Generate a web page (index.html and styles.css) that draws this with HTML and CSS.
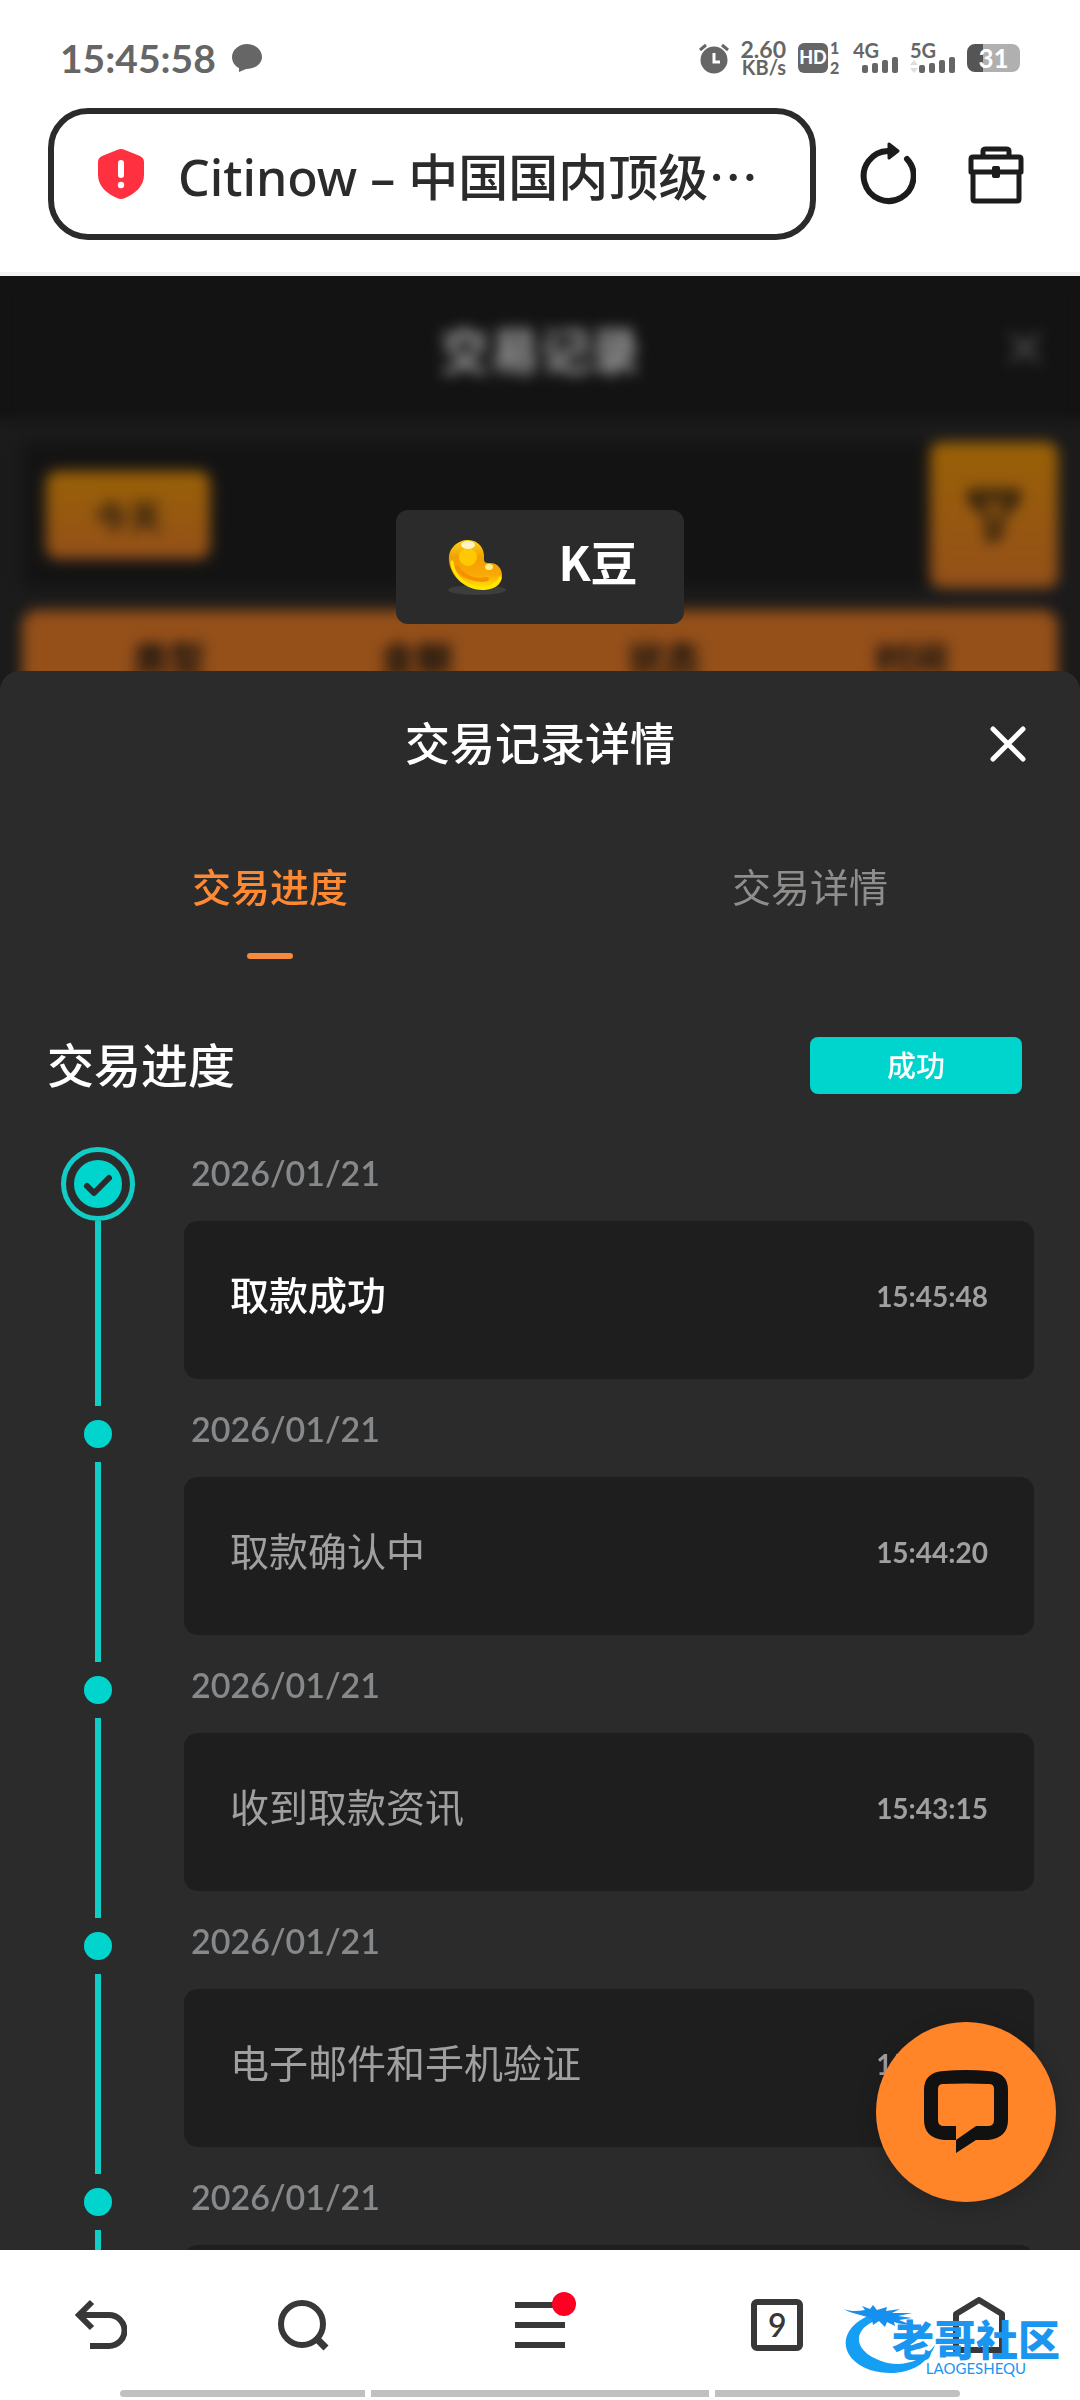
FILE: index.html
```html
<!DOCTYPE html>
<html lang="zh-CN">
  <head>
    <meta charset="UTF-8" />
    <meta name="viewport" content="width=device-width, initial-scale=1.0" />
    <title>交易记录详情</title>
    <link rel="stylesheet" href="styles.css">
  </head>
  <body>
    <header class="browser-top">
      <div class="status-bar">
        <div class="status-left">
          <span class="clock">15:45:58</span>
          <svg width="30" height="30" viewBox="0 0 30 30" fill="#666">
            <path d="M15 1C7 1 0 7 0 14c0 5 3 9 7 11v4l7-3c9 0 16-5 16-12S23 1 15 1z" />
          </svg>
        </div>
        <div class="status-right">
          <svg class="alarm" width="30" height="32" viewBox="0 0 30 32">
            <circle cx="15" cy="18" r="13.5" fill="#666" />
            <path d="M1 8l6-5M29 8l-6-5" stroke="#666" stroke-width="3" />
            <path d="M15 11v9h6" stroke="#fff" stroke-width="3" fill="none" />
          </svg>
          <div class="net-speed"><span>2.60</span><small>KB/s</small></div>
          <svg class="hd" width="43" height="44" viewBox="0 -6 43 44" fill="#666">
            <rect x="0" y="1" width="30" height="30" rx="6" />
            <text x="15" y="22" font-size="18" fill="#fff" text-anchor="middle">HD</text>
            <text x="32" y="12" font-size="16">1</text>
            <text x="32" y="32" font-size="16">2</text>
          </svg>
          <svg class="signal" width="45" height="44" viewBox="0 -6 45 44" fill="#666">
            <text x="0" y="16" font-size="20">4G</text>
            <rect x="9" y="23" width="6" height="8" rx="2" />
            <rect x="19" y="21" width="6" height="10" rx="2" />
            <rect x="29" y="18" width="6" height="13" rx="2" />
            <rect x="39" y="15" width="6" height="16" rx="2" />
          </svg>
          <svg class="signal" width="45" height="44" viewBox="0 -6 45 44" fill="#666">
            <text x="0" y="16" font-size="20">5G</text>
            <path d="M0 23l4-5 4 5zM0 26l4 5 4-5z" fill="#ddd" />
            <rect x="9" y="23" width="6" height="8" rx="2" />
            <rect x="19" y="21" width="6" height="10" rx="2" />
            <rect x="29" y="18" width="6" height="13" rx="2" />
            <rect x="39" y="15" width="6" height="16" rx="2" />
          </svg>
          <div class="battery">31</div>
        </div>
      </div>

      <div class="address-row">
        <div class="address-bar">
          <svg width="46" height="50" viewBox="0 0 46 50">
            <path d="M19 1q4-2 8 0l15 6q4 2 4 6v13c0 11-9 19-19 23q-4 2-8 0C9 45 0 37 0 26V13q0-4 4-6z" fill="#ff3040" />
            <path d="M23 14v12" stroke="#fff" stroke-width="6" stroke-linecap="round" />
            <circle cx="23" cy="36" r="3.2" fill="#fff" />
          </svg>
          <input type="text" aria-label="网址" value="Citinow – 中国国内顶级⋯" readonly />
        </div>
        <button class="icon-button" aria-label="刷新">
          <svg width="56" height="64" viewBox="0 0 56 64" fill="none" stroke="#1c1c1c" stroke-width="6">
            <path d="M28 9a25 25 0 1 0 19 8" stroke-linecap="round" />
            <path d="M29 2v14l9-7z" fill="#1c1c1c" stroke-width="3" stroke-linejoin="round" />
          </svg>
        </button>
        <button class="icon-button" aria-label="工具箱">
          <svg width="56" height="60" viewBox="0 0 56 60" fill="none" stroke="#1c1c1c" stroke-width="5" stroke-linejoin="round">
            <path d="M15 12V7q0-2 3-2h20q3 0 3 2v5" />
            <path d="M3 28V15q0-2 2-2h46q2 0 2 2v13zM5 28v27q0 2 2 2h42q2 0 2-2V28" />
            <rect x="26" y="24" width="4" height="8" fill="#1c1c1c" stroke-width="4" />
          </svg>
        </button>
      </div>
    </header>

    <main class="page">
      <!-- record list, sits behind the overlay -->
      <div class="records">
        <div class="records-header">
          <h1>交易记录</h1>
          <svg width="34" height="34" viewBox="0 0 34 34" stroke="#999" stroke-width="4">
            <path d="M3 3l28 28M31 3L3 31" />
          </svg>
        </div>
        <div class="filter-row">
          <div class="filter-dates"><button class="today">今天</button></div>
          <button class="filter-button" aria-label="筛选">
            <svg width="52" height="54" viewBox="0 0 52 54" fill="none" stroke="#1a1a1a" stroke-width="5">
              <path d="M3 4h46v8L32 30v17l-11 4V30L3 12zM3 13h46" />
            </svg>
          </button>
        </div>
        <table class="records-table">
          <thead>
            <tr><th>类型</th><th>金额</th><th>状态</th><th>时间</th></tr>
          </thead>
        </table>
      </div>

      <div class="overlay">
        <div class="currency">
          <svg width="60" height="58" viewBox="0 0 60 58">
            <defs>
              <linearGradient id="bean" x1="0" y1="0" x2="0" y2="1">
                <stop offset="0" stop-color="#ffd21a" />
                <stop offset="0.35" stop-color="#f0a000" />
                <stop offset="0.7" stop-color="#fba905" />
                <stop offset="1" stop-color="#ffee00" />
              </linearGradient>
            </defs>
            <ellipse cx="29" cy="52" rx="29" ry="5" fill="#3d3d3d" />
            <path d="M1 22C0 10 10 2 20 2c11 0 17 9 16 19 0 4 2 4 6 4 8 0 12 6 12 13 0 9-9 14-19 14C18 52 2 39 1 22z" fill="url(#bean)" />
            <path d="M4 24c1 15 16 26 30 26 9 0 16-4 18-10" fill="none" stroke="#ffe800" stroke-width="3" stroke-linecap="round" />
            <path d="M9 29c5 9 18 15 30 12" fill="none" stroke="#f59000" stroke-width="4" stroke-linecap="round" />
            <circle cx="20" cy="19" r="9" fill="#ffc800" />
            <ellipse cx="20" cy="7" rx="7" ry="4" fill="#fff3c4" />
            <ellipse cx="41" cy="29" rx="4" ry="3" fill="#ffec8a" />
          </svg>
          <span>K豆</span>
        </div>

        <section class="sheet">
          <div class="sheet-header">
            <h2>交易记录详情</h2>
            <button class="icon-button close" aria-label="关闭">
              <svg width="36" height="36" viewBox="0 0 36 36" stroke="#fff" stroke-width="5" stroke-linecap="round">
                <path d="M3 3l30 30M33 3L3 33" />
              </svg>
            </button>
          </div>

          <div class="tabs">
            <button class="tab active">交易进度</button>
            <button class="tab">交易详情</button>
          </div>

          <div class="progress-title">
            <h3>交易进度</h3>
            <span class="badge">成功</span>
          </div>

          <ol class="timeline">
            <li class="step done">
              <div class="rail">
                <span class="ring">
                  <svg width="48" height="48" viewBox="0 0 48 48">
                    <circle cx="24" cy="24" r="24" fill="#00d5cd" />
                    <path d="M13 26l7 7 15-15" fill="none" stroke="#2b2b2b" stroke-width="6" stroke-linecap="round" stroke-linejoin="round" />
                  </svg>
                </span>
              </div>
              <div class="step-body">
                <time class="date">2026/01/21</time>
                <div class="card"><span>取款成功</span><time>15:45:48</time></div>
              </div>
            </li>
            <li class="step">
              <div class="rail"><span class="dot"></span></div>
              <div class="step-body">
                <time class="date">2026/01/21</time>
                <div class="card"><span>取款确认中</span><time>15:44:20</time></div>
              </div>
            </li>
            <li class="step">
              <div class="rail"><span class="dot"></span></div>
              <div class="step-body">
                <time class="date">2026/01/21</time>
                <div class="card"><span>收到取款资讯</span><time>15:43:15</time></div>
              </div>
            </li>
            <li class="step">
              <div class="rail"><span class="dot"></span></div>
              <div class="step-body">
                <time class="date">2026/01/21</time>
                <div class="card"><span>电子邮件和手机验证</span><time>15:42:58</time></div>
              </div>
            </li>
            <li class="step">
              <div class="rail"><span class="dot"></span></div>
              <div class="step-body">
                <time class="date">2026/01/21</time>
                <div class="card"></div>
              </div>
            </li>
          </ol>
        </section>
      </div>

      <button class="chat-button" aria-label="在线客服">
        <svg width="84" height="84" viewBox="0 0 84 84" fill="#111">
          <path d="M32 70H20Q0 68 0 50V20Q0 2 20 1Q42-1 64 1Q84 2 84 20V50Q84 68 64 70H52L32 83V70L52 56H64Q70 56 70 50V19Q70 14 65 14Q42 13 19 14Q14 14 14 19V50Q14 56 20 56H32Z" />
        </svg>
      </button>
    </main>

    <footer class="browser-bottom">
      <nav class="toolbar">
        <button class="icon-button" aria-label="后退">
          <svg width="52" height="52" viewBox="0 0 52 52" fill="none" stroke="#383838" stroke-width="6">
            <path d="M17 3L4 16l13 13M4 16h30a15.500 15.500 0 0 1 0 31H15" />
          </svg>
        </button>
        <button class="icon-button" aria-label="搜索">
          <svg width="52" height="52" viewBox="0 0 52 52" fill="none" stroke="#383838" stroke-width="6">
            <circle cx="25" cy="25" r="21" />
            <path d="M38 38l11 11" stroke-width="7" />
          </svg>
        </button>
        <button class="icon-button menu" aria-label="菜单">
          <svg width="50" height="46" viewBox="0 0 50 46" stroke="#383838" stroke-width="6">
            <path d="M0 3h50M0 23h50M0 43h50" />
          </svg>
          <span class="red-dot"></span>
        </button>
        <button class="icon-button" aria-label="标签页"><span class="tab-count">9</span></button>
        <button class="icon-button" aria-label="主页">
          <svg width="52" height="56" viewBox="0 0 52 56" fill="none" stroke="#383838" stroke-width="6" stroke-linejoin="round">
            <path d="M26 3L3 17v36h46V17z" />
          </svg>
        </button>
      </nav>
      <div class="gesture-bar"><i></i><i></i><i></i></div>

      <div class="watermark">
        <svg width="92" height="76" viewBox="0 0 92 76">
          <path d="M26 15C-6 28-7 58 26 70c28 8 56 0 65-25-14 18-36 23-54 16C8 51 8 28 34 20z" fill="#159ff4" />
          <path d="M0 9c7 3 14 2 21 1l-3-4 8 3 3-4 4 5 10-3-1 4 14-2-8 4 20 0-14 3 14 2-13 2 10 4c-7 1-11-1-15-2l1 4-8-4-2 5-6-6-6 4-1-6C17 14 7 14 0 9z" fill="#1690ee" />
        </svg>
        <div class="watermark-text">
          <strong>老哥社区</strong>
          <small>LAOGESHEQU</small>
        </div>
      </div>
    </footer>
  </body>
</html>
```
FILE: styles.css
```css
* {
  margin: 0;
  padding: 0;
  box-sizing: border-box;
}

body {
  display: flex;
  flex-direction: column;
  height: 100vh;
  overflow: hidden;
  background: #fff;
  font-family: Lato, "Noto Sans CJK SC", sans-serif;
}

button {
  border: none;
  background: none;
  font-family: inherit;
  cursor: pointer;
}

svg {
  display: block;
  flex-shrink: 0;
}

/* Browser top */
.browser-top {
  flex-shrink: 0;
  padding: 40px 56px 32px 48px;
  border-bottom: 4px solid #f4f4f4;
}

.status-bar {
  display: flex;
  justify-content: space-between;
  align-items: center;
  height: 36px;
  margin: 0 4px 32px 12px;
  color: #666;
}

.status-left,
.status-right {
  display: flex;
  align-items: center;
}

.status-left {
  gap: 16px;
}

.status-right {
  gap: 12px;
  font-weight: bold;
}

.clock {
  font-size: 39px;
  font-weight: bold;
}

.net-speed {
  display: flex;
  flex-direction: column;
  align-items: flex-end;
  font-size: 23px;
  line-height: 18px;
}

.net-speed small {
  font-size: 20px;
}

.hd {
  font-weight: 900;
}

.battery {
  width: 53px;
  height: 28px;
  border-radius: 8px;
  background: linear-gradient(to right, #555 16px, #b0b0b0 16px);
  color: #fff;
  font-size: 26px;
  line-height: 28px;
  text-align: center;
}

.address-row {
  display: flex;
  align-items: center;
  gap: 52px;
}

.address-bar {
  display: flex;
  flex: 1;
  align-items: center;
  gap: 34px;
  min-width: 0;
  height: 132px;
  margin-right: -8px;
  padding: 0 38px 0 44px;
  border: 6px solid #2b2b2b;
  border-radius: 40px;
}

.address-bar input {
  width: 100%;
  min-width: 0;
  border: none;
  outline: none;
  background: none;
  color: #2b2b2b;
  font-family: "Noto Sans", "Noto Sans CJK SC", sans-serif;
  font-size: 50px;
  font-weight: 500;
}

.icon-button {
  display: flex;
  align-items: center;
  justify-content: center;
}

/* Record list */
.page {
  position: relative;
  flex: 1;
  min-height: 0;
  overflow: hidden;
}

.records {
  height: 100%;
  background: #2d2d2d;
}

.records-header {
  display: grid;
  grid-template-columns: 1fr auto 1fr;
  align-items: center;
  height: 144px;
  padding: 0 38px;
  background: #202020;
  color: #fff;
}

.records-header h1 {
  grid-column: 2;
  font-size: 50px;
}

.records-header svg {
  justify-self: end;
}

.filter-row {
  display: flex;
  height: 146px;
  margin: 22px 22px;
}

.filter-dates {
  display: flex;
  flex: 1;
  align-items: center;
  padding: 0 24px;
  border-radius: 12px;
  background: #212121;
}

.today,
.filter-button {
  border-radius: 12px;
  background: linear-gradient(#ffa20a, #f8852b);
}

.today {
  width: 164px;
  height: 88px;
  color: #1a1a1a;
  font-size: 34px;
  font-weight: 500;
}

.filter-button {
  display: flex;
  align-items: center;
  justify-content: center;
  width: 128px;
}

.records-table {
  width: calc(100% - 44px);
  height: 94px;
  margin: 0 22px;
  padding: 0 22px;
  border-radius: 16px 16px 0 0;
  background: #f8852b;
  table-layout: fixed;
}

.records-table th {
  color: #1a1a1a;
  font-size: 36px;
}

/* Overlay with the detail sheet */
.overlay {
  position: absolute;
  inset: 0;
  display: flex;
  flex-direction: column;
  padding-top: 234px;
  background: rgba(0, 0, 0, 0.4);
  backdrop-filter: blur(7px);
}

.currency {
  display: flex;
  align-self: center;
  align-items: center;
  gap: 50px;
  height: 114px;
  margin-bottom: 47px;
  padding: 0 46px 0 52px;
  border-radius: 12px;
  background: #2b2b2b;
  color: #fff;
  font-family: "Noto Sans CJK SC", sans-serif;
  font-size: 47px;
  font-weight: bold;
  line-height: 60px;
}

.currency span {
  padding-bottom: 12px;
}

.sheet {
  flex: 1;
  min-height: 0;
  overflow: hidden;
  border-radius: 20px 20px 0 0;
  background: #2b2b2b;
  color: #fff;
}

.sheet-header {
  display: grid;
  grid-template-columns: 1fr auto 1fr;
  align-items: center;
  height: 146px;
  padding: 0 54px;
}

.sheet-header h2,
.progress-title h3 {
  padding-bottom: 6px;
  font-weight: 500;
}

.sheet-header h2 {
  grid-column: 2;
  font-size: 45px;
}

.close {
  justify-self: end;
}

.tabs {
  display: flex;
  padding-top: 40px;
}

.tab {
  flex: 1;
  color: #8f8e8c;
  font-size: 39px;
  line-height: 60px;
}

.tab::after {
  content: "";
  display: block;
  width: 46px;
  height: 6px;
  margin: 36px auto 0;
  border-radius: 3px;
}

.tab.active {
  color: #ff8833;
  font-weight: 500;
}

.tab.active::after {
  background: #f58a3c;
}

.progress-title {
  display: flex;
  align-items: center;
  justify-content: space-between;
  height: 57px;
  margin-top: 78px;
  padding: 0 58px 0 47px;
}

.progress-title h3 {
  font-size: 47px;
}

.badge {
  width: 212px;
  border-radius: 8px;
  background: #00d5cd;
  font-size: 29px;
  font-weight: 500;
  line-height: 57px;
  text-align: center;
}

.timeline {
  margin-top: 53px;
  padding: 0 46px 0 61px;
  list-style: none;
}

.step {
  display: flex;
  gap: 49px;
}

.rail {
  display: flex;
  flex-direction: column;
  align-items: center;
  width: 74px;
}

.rail::after {
  content: "";
  flex: 1;
  width: 6px;
  background: #12cdc6;
}

.ring {
  display: flex;
  align-items: center;
  justify-content: center;
  width: 74px;
  height: 74px;
  border: 5px solid #12cdc6;
  border-radius: 50%;
}

.dot {
  width: 28px;
  height: 28px;
  margin: 14px 0;
  border-radius: 50%;
  background: #00d5cd;
}

.step-body {
  flex: 1;
  padding-bottom: 27px;
}

.done .step-body {
  padding-top: 3px;
}

.date {
  display: block;
  margin-bottom: 25px;
  padding-left: 7px;
  color: #85898b;
  font-size: 34px;
  font-weight: 600;
  line-height: 46px;
}

.card {
  display: flex;
  align-items: center;
  justify-content: space-between;
  height: 158px;
  padding: 0 46px;
  border-radius: 14px;
  background: #1e1e1e;
  color: #a0a0a0;
  font-size: 39px;
}

.card span {
  padding-bottom: 14px;
}

.card time {
  padding-bottom: 8px;
  font-size: 28px;
  font-weight: bold;
}

.done .card span {
  color: #fff;
  font-weight: 500;
}

.chat-button {
  position: absolute;
  right: 24px;
  bottom: 48px;
  display: flex;
  align-items: center;
  justify-content: center;
  width: 180px;
  height: 180px;
  border-radius: 50%;
  background: #ff8528;
  box-shadow: 0 4px 20px rgba(0, 0, 0, 0.2);
}

/* Browser bottom */
.browser-bottom {
  position: relative;
  flex-shrink: 0;
  padding-bottom: 3px;
}

.toolbar {
  display: grid;
  grid-template-columns: 1fr 1fr 1.35fr 1fr 1fr;
  height: 140px;
  padding-bottom: 6px;
}

.toolbar .icon-button {
  padding-top: 16px;
}

.menu {
  position: relative;
}

.red-dot {
  position: absolute;
  top: 42px;
  left: calc(50% + 12px);
  width: 24px;
  height: 24px;
  border-radius: 50%;
  background: #ff0022;
}

.tab-count {
  width: 52px;
  height: 52px;
  border: 6px solid #383838;
  border-radius: 6px;
  color: #383838;
  font-size: 32px;
  font-weight: 600;
  line-height: 40px;
}

.gesture-bar {
  display: flex;
  gap: 6px;
  padding: 0 120px;
}

.gesture-bar i {
  flex: 8;
  height: 7px;
  background: #c0c0c0;
}

.gesture-bar i:nth-child(2) {
  flex: 11;
}

.gesture-bar i:first-child {
  border-radius: 4px 0 0 4px;
}

.gesture-bar i:last-child {
  border-radius: 0 4px 4px 0;
}

.watermark {
  position: absolute;
  right: 20px;
  bottom: 24px;
  display: flex;
  align-items: flex-end;
  color: #1a96f0;
  pointer-events: none;
}

.watermark-text {
  display: flex;
  flex-direction: column;
  align-items: center;
  margin-left: -44px;
}

.watermark strong {
  font-family: "Noto Sans CJK SC", sans-serif;
  font-size: 42px;
  font-weight: 900;
  line-height: 46px;
}

.watermark small {
  font-size: 15px;
  line-height: 15px;
}
```
